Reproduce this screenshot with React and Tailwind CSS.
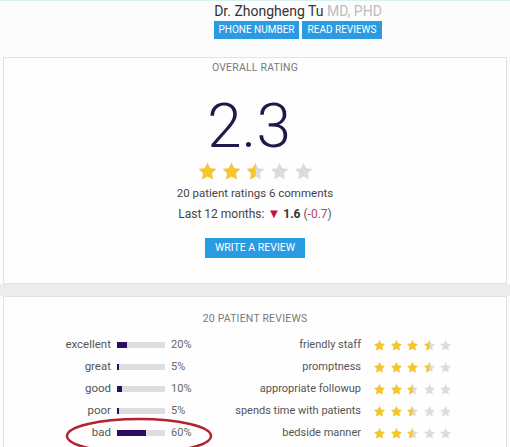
import { useId } from "react";

const STAR = "M12 2l3.09 6.26L22 9.27l-5 4.87 1.18 6.88L12 17.77l-6.18 3.25L7 14.14 2 9.27l6.91-1.01L12 2z";

function Star({ fill = 1, size = 20 }) {
  const id = useId();
  return (
    <svg width={size} height={size} viewBox="0 0 24 24" className="shrink-0">
      <defs>
        <clipPath id={id}>
          <rect x="0" y="0" width={24 * fill} height="24" />
        </clipPath>
      </defs>
      <path d={STAR} fill="#dcdcdc" />
      <path d={STAR} fill="#f6c62a" clipPath={`url(#${id})`} />
    </svg>
  );
}

function Stars({ value, size, gap }) {
  return (
    <div className={`flex ${gap}`}>
      {[0, 1, 2, 3, 4].map((i) => (
        <Star key={i} size={size} fill={Math.max(0, Math.min(1, value - i))} />
      ))}
    </div>
  );
}

const GRADES = [
  { label: "excellent", pct: 20 },
  { label: "great", pct: 5 },
  { label: "good", pct: 10 },
  { label: "poor", pct: 5 },
  { label: "bad", pct: 60 },
];

const ASPECTS = [
  { label: "friendly staff", value: 3.5 },
  { label: "promptness", value: 3.5 },
  { label: "appropriate followup", value: 2.5 },
  { label: "spends time with patients", value: 2.5 },
  { label: "bedside manner", value: 2.5 },
];

export default function App() {
  return (
    <div
      className="w-[510px] h-[447px] overflow-hidden bg-[#fcfcfc] relative"
      style={{ fontFamily: "Roboto, 'Liberation Sans', sans-serif" }}
    >
      {/* Header */}
      <div className="h-[57px] border-t border-[#d8f2f2] pl-[86px] flex flex-col items-center pt-[1px]">
        <p className="text-[14px] leading-[19px] text-[#333]">
          Dr. Zhongheng Tu <span className="text-[#bdbdbd]">MD, PHD</span>
        </p>
        <div className="flex gap-[3px]">
          <button className="h-[18px] w-[85px] bg-[#2a9be3] text-white text-[10px] leading-[18px] uppercase">
            Phone Number
          </button>
          <button className="h-[18px] w-[80px] bg-[#2a9be3] text-white text-[10px] leading-[18px] uppercase">
            Read Reviews
          </button>
        </div>
      </div>

      {/* Overall rating */}
      <div className="ml-[3px] mr-[3px] h-[227px] bg-[#fefefe] border border-[#e2e2e2] flex flex-col items-center">
        <p className="mt-[3px] text-[10.5px] leading-[14px] text-[#7a7a7a] tracking-[0.2px]">OVERALL RATING</p>
        <p className="mt-[20px] pr-[12px] text-[62px] leading-[62px] font-light text-[#1c1a4a]">2.3</p>
        <div className="mt-[4px]">
          <Stars value={2.5} size={21} gap="gap-[3px]" />
        </div>
        <p className="mt-[4px] text-[11.5px] leading-[15px] text-[#444]">20 patient ratings 6 comments</p>
        <p className="mt-[5px] text-[12px] leading-[16px] text-[#444]">
          Last 12 months: <span className="text-[#c2123d] text-[13px]">▼</span>{" "}
          <span className="font-bold text-[#333]">1.6</span>{" "}
          <span className="text-[#555]">(</span>
          <span className="text-[#b8435e]">-0.7</span>
          <span className="text-[#555]">)</span>
        </p>
        <button className="mt-[16px] h-[20px] w-[100px] bg-[#2a9be3] text-white text-[10.5px] leading-[20px] uppercase">
          Write a Review
        </button>
      </div>

      <div className="h-[12px] bg-[#ececec]" />

      {/* Patient reviews */}
      <div className="ml-[3px] mr-[3px] h-[200px] bg-[#fefefe] border border-[#e2e2e2]">
        <p className="mt-[15px] text-center text-[10.5px] leading-[14px] text-[#7a7a7a] tracking-[0.2px]">
          20 PATIENT REVIEWS
        </p>
        <div className="flex mt-[8px]">
          <div className="w-[206px] flex flex-col">
            {GRADES.map((g) => (
              <div key={g.label} className="h-[22px] flex items-center">
                <span className="w-[107px] text-right text-[11.5px] text-[#555]">{g.label}</span>
                <div className="ml-[6px] w-[48px] h-[6px] bg-[#dedede]">
                  <div className="h-full bg-[#2b0c5e]" style={{ width: `${Math.max(g.pct, 5)}%` }} />
                </div>
                <span className="ml-[6px] text-[11px] text-[#666]">{g.pct}%</span>
              </div>
            ))}
          </div>
          <div className="flex flex-col">
            {ASPECTS.map((a) => (
              <div key={a.label} className="h-[22px] flex items-center">
                <span className="w-[151px] text-right text-[11px] text-[#555]">{a.label}</span>
                <div className="ml-[12px]">
                  <Stars value={a.value} size={13} gap="gap-[3.5px]" />
                </div>
              </div>
            ))}
          </div>
        </div>
      </div>

      {/* Red annotation circling the "bad" row */}
      <svg className="absolute left-[60px] top-[412px]" width="160" height="50" viewBox="0 0 160 50">
        <ellipse cx="79" cy="24" rx="72" ry="17" fill="none" stroke="#b3232f" strokeWidth="2.5" />
      </svg>
    </div>
  );
}
